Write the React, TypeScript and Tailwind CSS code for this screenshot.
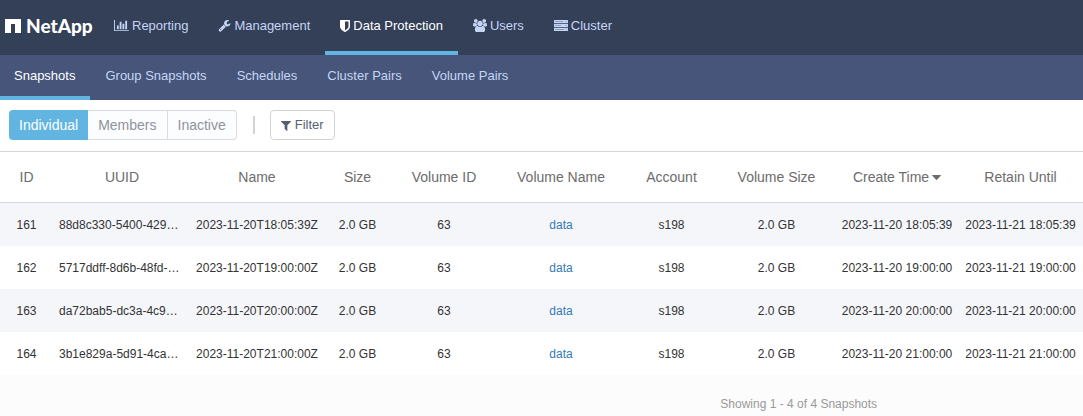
import type { ReactNode } from "react";

function Icon({ width = 1792, className, children }: { width?: number; className: string; children: ReactNode }) {
  return (
    <svg viewBox={`0 0 ${width} 1792`} className={className} fill="currentColor" aria-hidden="true">
      {children}
    </svg>
  );
}

const BarChartIcon = () => (
  <Icon width={2048} className="h-[13px] w-[15px] shrink-0">
    <path d="M640 896v512h-256v-512h256zM1024 384v1024h-256v-1024h256zM2048 1536v128h-2048v-1536h128v1408h1920zM1408 640v768h-256v-768h256zM1792 256v1152h-256v-1152h256z" />
  </Icon>
);

const WrenchIcon = () => (
  <Icon className="h-[13px] w-[13px] shrink-0">
    <path d="M448 1472q0-26-19-45t-45-19-45 19-19 45 19 45 45 19 45-19 19-45zm644-420l-682 682q-37 37-90 37-52 0-91-37l-106-108q-38-36-38-90 0-53 38-91l681-681q39 98 114.5 173.5t173.5 114.5zm634-435q0 39-23 106-47 134-164.5 217.5t-258.5 83.5q-185 0-316.5-131.5t-131.5-316.5 131.5-316.5 316.5-131.5q58 0 121.5 16.5t107.5 46.5q16 11 16 28t-16 28l-293 169v224l193 107q5-3 79-48.5t135.5-81 70.5-35.5q15 0 23.5 10t8.5 25z" />
  </Icon>
);

const ShieldIcon = () => (
  <svg viewBox="256 0 1280 1664" className="h-[13px] w-[10px] shrink-0" fill="currentColor" aria-hidden="true">
    <path d="M1344 960v-640h-448v1137q119-63 213-137 235-184 235-360zm192-768v768q0 86-33.5 170.5t-83 150-118 127.5-126.5 103-121 77.5-89.5 49.5-42.5 20q-12 6-26 6t-26-6q-16-7-42.5-20t-89.5-49.5-121-77.5-126.5-103-118-127.5-83-150-33.5-170.5v-768q0-26 19-45t45-19h1152q26 0 45 19t19 45z" />
  </svg>
);

const UsersIcon = () => (
  <Icon width={1920} className="h-[13px] w-[14px] shrink-0">
    <path d="M593 896q-162 5-265 128h-134q-82 0-138-40.5t-56-118.5q0-353 124-353 6 0 43.5 21t97.5 42.5 119 21.5q67 0 133-23-5 37-5 66 0 139 81 256zm1071 637q0 120-73 189.5t-194 69.5h-874q-121 0-194-69.5t-73-189.5q0-53 3.5-103.5t14-109 26.5-108.5 43-97.5 62-81 85.5-53.5 111.5-20q10 0 43 21.5t73 48 107 48 135 21.5 135-21.5 107-48 73-48 43-21.5q61 0 111.5 20t85.5 53.5 62 81 43 97.5 26.5 108.5 14 109 3.5 103.5zm-1024-1277q0 106-75 181t-181 75-181-75-75-181 75-181 181-75 181 75 75 181zm704 384q0 159-112.5 271.5t-271.5 112.5-271.5-112.5-112.5-271.5 112.5-271.5 271.5-112.5 271.5 112.5 112.5 271.5zm576 225q0 78-56 118.5t-138 40.5h-134q-103-123-265-128 81-117 81-256 0-29-5-66 66 23 133 23 59 0 119-21.5t97.5-42.5 43.5-21q124 0 124 353zm-128-609q0 106-75 181t-181 75-181-75-75-181 75-181 181-75 181 75 75 181z" />
  </Icon>
);

const ServerIcon = () => (
  <svg viewBox="0 0 14 13" className="h-[13px] w-[14px] shrink-0" fill="currentColor" aria-hidden="true">
    <rect width="14" height="3.2" y="1" rx="0.3" />
    <rect width="14" height="3.2" y="4.9" rx="0.3" />
    <rect width="14" height="3.2" y="8.8" rx="0.3" />
    <g fill="#343f58" opacity="0.45">
      <rect x="1" y="2.2" width="8" height="0.8" />
      <rect x="1" y="6.1" width="6" height="0.8" />
      <rect x="1" y="10" width="9" height="0.8" />
      <rect x="11.6" y="2.1" width="1" height="1" />
      <rect x="11.6" y="6" width="1" height="1" />
      <rect x="11.6" y="9.9" width="1" height="1" />
    </g>
  </svg>
);

const FilterIcon = () => (
  <svg viewBox="192 0 1408 1792" className="h-[13px] w-[10px] shrink-0" fill="currentColor" aria-hidden="true">
    <path d="M1595 295q17 41-14 70l-493 493v742q0 42-39 59-13 5-25 5-27 0-45-19l-256-256q-19-19-19-45v-486l-493-493q-31-29-14-70 17-39 59-39h1280q42 0 59 39z" />
  </svg>
);

const mainNav = [
  { label: "Reporting", icon: <BarChartIcon /> },
  { label: "Management", icon: <WrenchIcon /> },
  { label: "Data Protection", icon: <ShieldIcon />, active: true },
  { label: "Users", icon: <UsersIcon /> },
  { label: "Cluster", icon: <ServerIcon /> },
];

const subNav = ["Snapshots", "Group Snapshots", "Schedules", "Cluster Pairs", "Volume Pairs"];

const columns = [
  { label: "ID", width: "w-[53px]" },
  { label: "UUID", width: "w-[138px]" },
  { label: "Name", width: "w-[132px]" },
  { label: "Size", width: "w-[69px]" },
  { label: "Volume ID", width: "w-[104px]" },
  { label: "Volume Name", width: "w-[130px]" },
  { label: "Account", width: "w-[91px]" },
  { label: "Volume Size", width: "w-[119px]" },
  { label: "Create Time", width: "w-[122px]", sorted: true },
  { label: "Retain Until", width: "w-[125px]" },
];

const rows = [
  { id: 161, uuid: "88d8c330-5400-429…", time: "18:05:39" },
  { id: 162, uuid: "5717ddff-8d6b-48fd-…", time: "19:00:00" },
  { id: 163, uuid: "da72bab5-dc3a-4c9…", time: "20:00:00" },
  { id: 164, uuid: "3b1e829a-5d91-4ca…", time: "21:00:00" },
];

export default function App() {
  return (
    <div className="min-h-screen bg-[#fcfcfc] font-['Liberation_Sans',Arial,sans-serif] text-[#333]">
      <header className="flex h-[55px] bg-[#343f58]">
        <a href="#home" className="flex w-[99px] shrink-0 items-center gap-[5px] pb-[3px] pl-[5px] text-white">
          <svg viewBox="0 0 16 14" className="h-[14px] w-4 shrink-0" fill="currentColor" aria-hidden="true">
            <path d="M0 0h16v14h-6V5H6v9H0z" />
          </svg>
          <span className="font-['Lato',sans-serif] text-[19px] leading-6 font-black">NetApp</span>
        </a>
        <nav aria-label="Main" className="flex">
          {mainNav.map((item) => (
            <a
              key={item.label}
              href="#"
              className={`flex items-center gap-[3px] border-b-4 px-[15px] text-[13px] whitespace-nowrap ${
                item.active ? "border-[#62b5e0] text-white" : "border-transparent text-[#c5d5f5]"
              }`}
            >
              {item.icon}
              {item.label}
            </a>
          ))}
        </nav>
      </header>

      <nav aria-label="Data Protection" className="flex h-[45px] bg-[#465579]">
        {subNav.map((label, i) => (
          <a
            key={label}
            href="#"
            className={`flex items-center border-b-4 pt-[1px] pr-[15px] text-[13px] whitespace-nowrap ${
              i === 0 ? "border-[#62b5e0] pl-[14px] text-white" : "border-transparent pl-[15px] text-[#c5d5f5]"
            }`}
          >
            {label}
          </a>
        ))}
      </nav>

      <main>
        <div className="flex h-[52px] items-center border-b border-[#d5d6d9] bg-white pb-[1px] pl-[9px]">
          <div role="group" aria-label="Snapshot view" className="flex h-[30px] text-sm">
            <button type="button" aria-pressed="true" className="rounded-l bg-[#62b5e0] px-[10px] text-white">
              Individual
            </button>
            <button type="button" className="border-y border-r border-[#d9dbe0] bg-[#fcfdff] px-[10px] text-[#8f939b]">
              Members
            </button>
            <button type="button" className="rounded-r border-y border-r border-[#d9dbe0] bg-[#fcfdff] px-[10px] text-[#8f939b]">
              Inactive
            </button>
          </div>
          <div className="mr-[15px] ml-4 h-[18px] w-[2px] bg-[#d2d3d6]" />
          <button
            type="button"
            className="flex h-[30px] items-center gap-1 rounded border border-[#d2d3d6] bg-white px-[10px] text-[13px] text-[#566073]"
          >
            <FilterIcon />
            Filter
          </button>
        </div>

        <table className="w-full table-fixed border-separate border-spacing-0 bg-white text-center whitespace-nowrap">
          <thead>
            <tr className="h-[51px] text-sm text-[#6c6c6c]">
              {columns.map((c) => (
                <th
                  key={c.label}
                  scope="col"
                  aria-sort={c.sorted ? "descending" : undefined}
                  className={`${c.width} border-b border-[#d5d6d9] p-0 font-normal`}
                >
                  {c.sorted ? (
                    <span className="inline-flex items-center gap-[3px]">
                      {c.label}
                      <svg viewBox="0 0 9 5" className="h-[5px] w-[9px]" fill="currentColor" aria-hidden="true">
                        <path d="M0.5 0h8q.7 .2 .2 .8L4.9 4.7q-.4.4-.8 0L.3 .8Q-.2 .2 .5 0z" />
                      </svg>
                    </span>
                  ) : (
                    c.label
                  )}
                </th>
              ))}
            </tr>
          </thead>
          <tbody className="text-xs">
            {rows.map((r) => (
              <tr key={r.id} className="h-[43px] odd:bg-[#f5f6fa]">
                <td>{r.id}</td>
                <td className="pl-[6px] text-left">{r.uuid}</td>
                <td>2023-11-20T{r.time}Z</td>
                <td>2.0 GB</td>
                <td>63</td>
                <td>
                  <a href="#volume" className="text-[#337ab7]">
                    data
                  </a>
                </td>
                <td>s198</td>
                <td>2.0 GB</td>
                <td>2023-11-20 {r.time}</td>
                <td>2023-11-21 {r.time}</td>
              </tr>
            ))}
          </tbody>
        </table>

        <p className="ml-auto w-[52.5%] pt-[21px] text-center text-xs text-[#999]">Showing 1 - 4 of 4 Snapshots</p>
      </main>
    </div>
  );
}
